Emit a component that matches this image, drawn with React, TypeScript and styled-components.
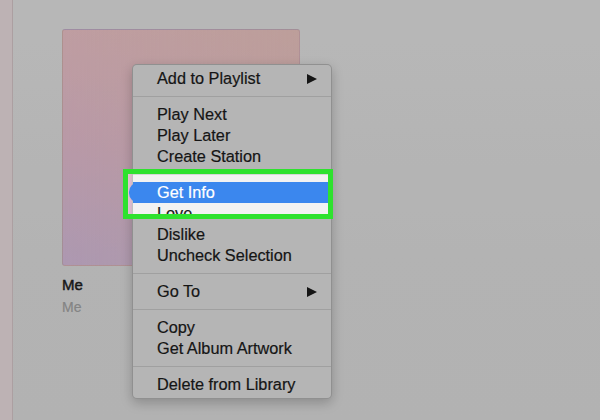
import React from "react";
import styled, { createGlobalStyle } from "styled-components";

const GlobalStyle = createGlobalStyle`
  html, body, #root { margin: 0; padding: 0; width: 600px; height: 420px; overflow: hidden; }
  body { font-family: "Liberation Sans", Arial, Helvetica, sans-serif; }
  * { box-sizing: border-box; }
`;

const Window = styled.div`
  position: relative;
  display: flex;
  width: 600px;
  height: 420px;
  overflow: hidden;
  background: #f0f0f0;
`;

const Sidebar = styled.div`
  width: 13px;
  flex: none;
  background: #fdeef0;
  border-right: 1px solid #e6d4d7;
`;

const Main = styled.main`
  flex: 1;
  padding: 29px 0 0 49px;
  background: linear-gradient(180deg, #f5f5f5 0%, #efefef 60%, #eeeeee 100%);
`;

const Tile = styled.div`
  display: flex;
  flex-direction: column;
  width: 238px;
`;

const Art = styled.div`
  width: 238px;
  height: 237px;
  border-radius: 3px;
  border: 1px solid rgba(0, 0, 0, 0.08);
  background:
    linear-gradient(90deg, rgba(255, 214, 218, 0.3), rgba(250, 214, 200, 0.55)),
    linear-gradient(180deg, #ffd0d6 0%, #f2c8e2 50%, #dcc6f4 100%);
`;

const Title = styled.div`
  margin-top: 10px;
  font-size: 15px;
  line-height: 18px;
  color: #222222;
  -webkit-text-stroke: 0.45px #222222;
`;

const Subtitle = styled.div`
  margin-top: 4px;
  font-size: 14px;
  line-height: 18px;
  color: #b0b0b0;
  -webkit-text-stroke: 0.2px #b0b0b0;
`;

const Menu = styled.div`
  position: absolute;
  left: 132px;
  top: 64px;
  width: 200px;
  padding: 3px 0;
  background: #f2f2f2;
  border: 1px solid rgba(0, 0, 0, 0.2);
  border-radius: 5px;
  box-shadow: 0 4px 12px rgba(0, 0, 0, 0.22);
  z-index: 5;
`;

const Item = styled.div<{ $active?: boolean }>`
  position: relative;
  display: flex;
  align-items: center;
  justify-content: space-between;
  height: 21px;
  padding: 0 14px 0 24px;
  font-size: 16.3px;
  color: ${(p) => (p.$active ? "#ffffff" : "#1c1c1c")};
  -webkit-text-stroke: 0.2px ${(p) => (p.$active ? "#ffffff" : "#1c1c1c")};
  background: ${(p) => (p.$active ? "#3b87ee" : "transparent")};
  white-space: nowrap;

  ${(p) =>
    p.$active &&
    `
    &::before {
      content: "";
      position: absolute;
      left: -4px;
      top: 0;
      width: 12px;
      height: 21px;
      border-radius: 10px 0 0 10px;
      background: #3b87ee;
    }
  `}
`;

const Label = styled.span`
  position: relative;
`;

const Arrow = styled.span`
  width: 0;
  height: 0;
  border-top: 5px solid transparent;
  border-bottom: 5px solid transparent;
  border-left: 10px solid #1c1c1c;
`;

const Separator = styled.div`
  height: 15px;
  display: flex;
  align-items: center;

  &::after {
    content: "";
    flex: 1;
    height: 1px;
    background: #d6d6d6;
  }
`;

const Callout = styled.div`
  position: absolute;
  left: 123px;
  top: 169px;
  width: 210px;
  height: 50px;
  border: 5px solid #2ee22e;
  box-shadow: 0 0 0 1200px rgba(0, 0, 0, 0.25);
  z-index: 10;
  pointer-events: none;
`;

type Entry = { label: string; sub?: boolean; active?: boolean } | "sep";

const entries: Entry[] = [
  { label: "Add to Playlist", sub: true },
  "sep",
  { label: "Play Next" },
  { label: "Play Later" },
  { label: "Create Station" },
  "sep",
  { label: "Get Info", active: true },
  { label: "Love" },
  { label: "Dislike" },
  { label: "Uncheck Selection" },
  "sep",
  { label: "Go To", sub: true },
  "sep",
  { label: "Copy" },
  { label: "Get Album Artwork" },
  "sep",
  { label: "Delete from Library" },
];

export default function App() {
  return (
    <>
      <GlobalStyle />
      <Window>
        <Sidebar />
        <Main>
          <Tile>
            <Art />
            <Title>Me</Title>
            <Subtitle>Me</Subtitle>
          </Tile>
        </Main>
        <Menu>
          {entries.map((e, i) =>
            e === "sep" ? (
              <Separator key={i} />
            ) : (
              <Item key={i} $active={e.active}>
                <Label>{e.label}</Label>
                {e.sub && <Arrow />}
              </Item>
            )
          )}
        </Menu>
        <Callout />
      </Window>
    </>
  );
}
